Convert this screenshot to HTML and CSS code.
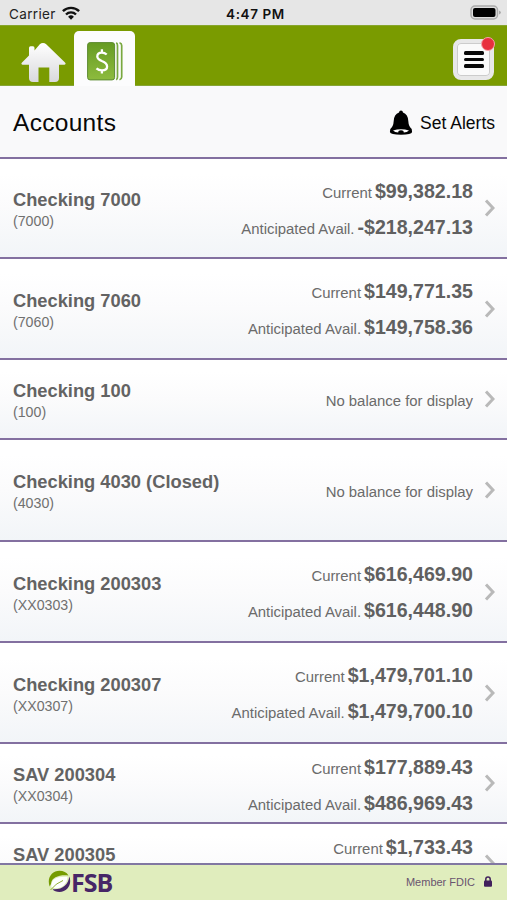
FILE: index.html
```html
<!DOCTYPE html>
<html lang="en">
<head>
<meta charset="utf-8">
<title>Accounts</title>
<link rel="stylesheet" href="styles.css">
</head>
<body>
<div class="screen">
  <div class="status">
    <div class="carrier"><span>Carrier</span>
      <svg width="18" height="14" viewBox="0 0 18 14"><g fill="none" stroke="#111" stroke-width="2.4"><path d="M.9 5.2a11.5 11.5 0 0 1 16.2 0"/><path d="M4 8.500a7 7 0 0 1 10 0"/></g><path d="M9 13.700l-2.900-3a4.100 4.100 0 0 1 5.800 0z" fill="#111"/></svg>
    </div>
    <div class="time">4:47 PM</div>
    <svg class="battery" width="32" height="16" viewBox="0 0 32 16"><rect x="1" y="1" width="26.5" height="13" rx="4" fill="#dedede" stroke="#aaa" stroke-width="1.5"/><rect x="3" y="3" width="22.5" height="9" rx="2" fill="#000"/><path d="M29 5.500q2 .8 2 2t-2 2z" fill="#aaa"/></svg>
  </div>
  <header class="nav">
    <svg class="home" width="46" height="40" viewBox="0 0 46 40"><defs><linearGradient id="hg" x2="0" y2="1"><stop offset="0" stop-color="#fff"/><stop offset="1" stop-color="#d9d9dc"/></linearGradient></defs><path d="M22 0q1.800 0 3.200 1.200L44 19.500q1.500 1.800-.5 2.300H38V35q0 4-4 4h-5.700V24.500H17.500V39H12q-4 0-4-4V21.800H1.500q-2-.5-.5-2.300L8 12.500V5q0-1.800 1.500-1.800H12q1.500 0 1.500 1.800v2.500l5.300-6.300Q20.200 0 22 0z" fill="url(#hg)"/></svg>
    <div class="tab">
      <svg width="36" height="39" viewBox="0 0 36 39"><defs><linearGradient id="mg" x2="0" y2="1"><stop offset="0" stop-color="#669b23"/><stop offset="1" stop-color="#8dbb3e"/></linearGradient></defs><rect x=".6" y=".6" width="27" height="37.300" rx="2.500" fill="url(#mg)" stroke="#5d8c32" stroke-width="1"/><path d="M29.200.8q1.300.6 1.300 2.700v31.500q0 2-1.300 2.700M32.500.8q2.200.6 2.200 2.700v31.500q0 2-2.200 2.700" fill="none" stroke="#79a840" stroke-width="1.700"/><path d="M19.700 12.500q-2-1.800-4.800-1.800-4.600 0-4.600 3.800 0 2.600 4.500 4.500 5.300 2.100 5.300 5.500 0 3.900-5.100 3.900-3.400 0-5.500-2M14.900 7.300v3.700M14.900 28v3.400" fill="none" stroke="#fff" stroke-width="2.300"/></svg>
    </div>
    <div class="menu"><i></i><i></i><i></i><b class="dot"></b></div>
  </header>
  <div class="heading">
    <h1>Accounts</h1>
    <div class="alerts">
      <svg width="24" height="26" viewBox="0 0 24 26"><path d="M12 .5q1.800 0 2 2.100 5 1.900 5.300 8.400.3 5.500 3.400 8l.4 3Q22.500 24.800 12 24.800T.9 22l.4-3q3.100-2.500 3.400-8Q5 4.500 10 2.600 10.200.5 12 .5z"/><path d="M4 20.500q8-2.400 16 0-2 1.900-5.200 2 0-2.300-2.800-2.300t-2.800 2.300Q6 22.400 4 20.500z" fill="#fff"/></svg>
      <span>Set Alerts</span>
    </div>
  </div>
  <main class="list">
    <div class="row h100"><div class="account"><strong>Checking 7000</strong><small>(7000)</small></div><div class="balances"><p>Current<b>$99,382.18</b></p><p>Anticipated Avail.<b>-$218,247.13</b></p></div><svg class="chev" viewBox="0 0 11 18"><path d="M2 1.500L9 9l-7 7.500"/></svg></div>
    <div class="row"><div class="account"><strong>Checking 7060</strong><small>(7060)</small></div><div class="balances"><p>Current<b>$149,771.35</b></p><p>Anticipated Avail.<b>$149,758.36</b></p></div><svg class="chev" viewBox="0 0 11 18"><path d="M2 1.500L9 9l-7 7.500"/></svg></div>
    <div class="row short"><div class="account"><strong>Checking 100</strong><small>(100)</small></div><div class="balances empty"><p>No balance for display</p></div><svg class="chev" viewBox="0 0 11 18"><path d="M2 1.500L9 9l-7 7.500"/></svg></div>
    <div class="row h102"><div class="account"><strong>Checking 4030 (Closed)</strong><small>(4030)</small></div><div class="balances empty"><p>No balance for display</p></div><svg class="chev" viewBox="0 0 11 18"><path d="M2 1.500L9 9l-7 7.500"/></svg></div>
    <div class="row"><div class="account"><strong>Checking 200303</strong><small>(XX0303)</small></div><div class="balances"><p>Current<b>$616,469.90</b></p><p>Anticipated Avail.<b>$616,448.90</b></p></div><svg class="chev" viewBox="0 0 11 18"><path d="M2 1.500L9 9l-7 7.500"/></svg></div>
    <div class="row"><div class="account"><strong>Checking 200307</strong><small>(XX0307)</small></div><div class="balances"><p>Current<b>$1,479,701.10</b></p><p>Anticipated Avail.<b>$1,479,700.10</b></p></div><svg class="chev" viewBox="0 0 11 18"><path d="M2 1.500L9 9l-7 7.500"/></svg></div>
    <div class="row short"><div class="account"><strong>SAV 200304</strong><small>(XX0304)</small></div><div class="balances low"><p>Current<b>$177,889.43</b></p><p>Anticipated Avail.<b>$486,969.43</b></p></div><svg class="chev" viewBox="0 0 11 18"><path d="M2 1.500L9 9l-7 7.500"/></svg></div>
    <div class="row short"><div class="account"><strong>SAV 200305</strong><small></small></div><div class="balances low"><p>Current<b>$1,733.43</b></p><p></p></div><svg class="chev" viewBox="0 0 11 18"><path d="M2 1.500L9 9l-7 7.500"/></svg></div>
  </main>
  <footer class="footer">
    <div class="brand">
      <svg width="23" height="23" viewBox="0 0 23 23"><path d="M1.700 16.500C-1.500 8 4 .8 11.500.8c4 0 7 1.500 9 4.700C12 4.500 3.500 7 3.200 13.500z" fill="#759b00"/><path d="M21.300 6.500C24.300 14 19.500 22 11.500 22c-3 0-5.500-1-7-2.800C14 20 20.500 15 21.300 6.500z" fill="#472667"/><path d="M3.500 17.500C2 9 9 6.300 19.500 6.800 19 15.500 12 19.500 4.500 17.800z" fill="#fff"/><path d="M2.500 20Q8 13 15 10.500" fill="none" stroke="#759b00" stroke-width=".8"/></svg>
      <span>FSB</span>
    </div>
    <div class="fdic"><span>Member FDIC</span>
      <svg width="8" height="11" viewBox="0 0 8 11"><path d="M1.800 5V3.200a2.200 2.200 0 0 1 4.400 0V5" fill="none" stroke="#41205c" stroke-width="1.500"/><rect y="4.500" width="8" height="6.300" rx="1" fill="#41205c"/></svg>
    </div>
  </footer>
</div>
</body>
</html>
```
FILE: styles.css
```css
* { box-sizing: border-box; }
body { margin: 0; font-family: "Liberation Sans", Arial, sans-serif; }
svg { display: block; flex: none; }
.screen { width: 507px; height: 900px; display: flex; flex-direction: column; overflow: hidden; background: #fff; }
.status { height: 25px; flex: none; background: #e6e6e6; display: grid; grid-template-columns: 1fr auto 1fr; align-items: center; padding: 2px 5px 0 9px; font-family: Inter, sans-serif; font-size: 13.5px; color: #222; }
.carrier { display: flex; align-items: center; gap: 6px; letter-spacing: .35px; }
.carrier svg { margin-top: -2px; }
.time { font-weight: 600; color: #111; letter-spacing: .6px; }
.battery { justify-self: end; margin-top: -1px; }
.nav { height: 61px; flex: none; background: #7a9b00; display: flex; align-items: flex-start; padding-left: 21px; border-top: 1px solid #87a52c; border-bottom: 1px solid #86a536; }
.home { margin-top: 17px; }
.tab { width: 61px; height: 56px; margin: 5px 0 -1px 7px; background: #fcfcfd; border-radius: 5px 5px 0 0; padding: 11px 0 0 13px; }
.menu { position: relative; width: 41px; height: 41px; margin: 13px 13px 0 auto; border: 4px solid #e8e8e8; border-radius: 8px; background: #fafafa; box-shadow: inset 0 0 0 1px #ccc; display: flex; flex-direction: column; align-items: center; justify-content: center; gap: 3px; }
.menu i { width: 20px; height: 3.400px; border-radius: 1.500px; background: #080808; }
.dot { position: absolute; right: -5px; top: -6px; width: 14px; height: 14px; border-radius: 50%; background: #e8303e; border: 1px solid #f3a5aa; }
.heading { height: 73px; flex: none; background: #f9f9fa; border-bottom: 2px solid #8370a0; display: flex; justify-content: space-between; align-items: center; padding: 3px 12px 0 13px; }
h1 { margin: 0; font-size: 24.500px; font-weight: 400; color: #080808; letter-spacing: .3px; }
.alerts { display: flex; align-items: center; gap: 7px; font-size: 17.500px; color: #080808; }
.list { flex: 1; min-height: 0; overflow: hidden; }
.row { height: 101px; border-bottom: 2px solid #8370a0; background: linear-gradient(#fff 15%, #fbfbfc 50%, #f2f5f8); display: flex; align-items: center; padding: 0 12px 0 13px; color: #636363; }
.row.h100 { height: 100px; }
.row.h102 { height: 102px; }
.row.short { height: 80px; }
.account { display: flex; flex-direction: column; white-space: nowrap; padding-top: 4px; }
.account strong { font-size: 18.300px; line-height: 22px; }
.account small { font-size: 14.200px; line-height: 20px; min-height: 20px; color: #707070; }
.balances { margin-left: auto; text-align: right; white-space: nowrap; font-size: 14.900px; padding-top: 5px; }
.balances.low { padding-top: 7px; }
.balances.empty { padding-top: 3px; }
.balances p { margin: 0; height: 36px; line-height: 36px; color: #6b6b6b; }
.balances b { font-size: 19.600px; line-height: 1; color: #606060; margin-left: 3px; }
.chev { width: 11px; height: 18px; margin-left: 11px; }
.chev path { fill: none; stroke: #b9b9b9; stroke-width: 3; }
.footer { height: 37px; flex: none; border-top: 2px solid #8177a2; background: #e0edbd; display: flex; align-items: center; justify-content: space-between; padding: 0 15px 2px 48px; }
.brand { display: flex; align-items: center; color: #472667; font: 700 25px/26px "Open Sans", sans-serif; letter-spacing: -1px; }
.fdic { display: flex; align-items: center; gap: 9px; font-size: 11px; color: #69546f; }
```
